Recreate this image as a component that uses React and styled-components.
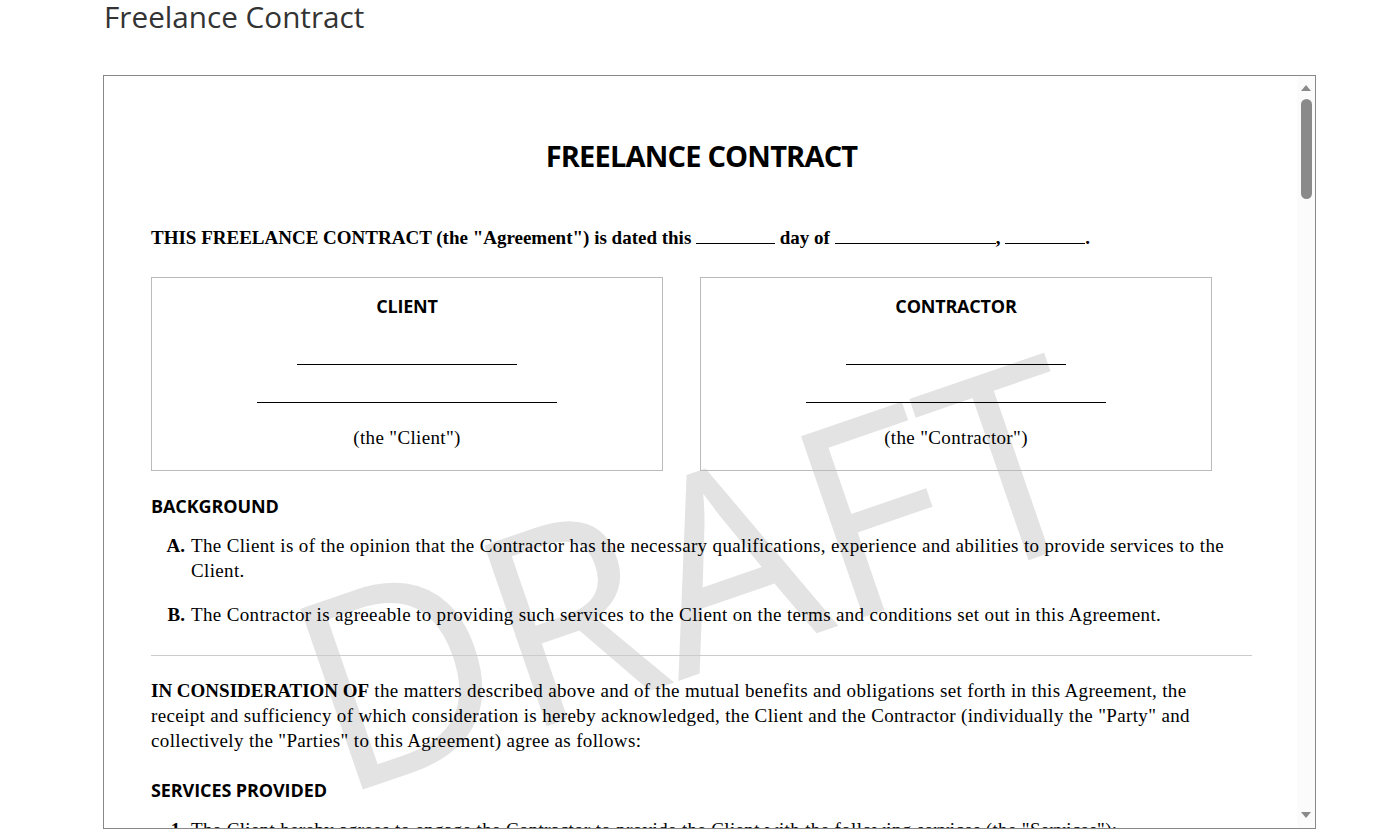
import React from 'react';
import styled, { createGlobalStyle } from 'styled-components';

const GlobalStyle = createGlobalStyle`
    html, body {
        margin: 0;
        padding: 0;
        background: #fff;
    }
    body {
        font-family: "Open Sans", "Liberation Sans", sans-serif;
        overflow: hidden;
    }
`;

const Page = styled.div`
    padding: 0 0 0 103px;
`;

const PageTitle = styled.h1`
    margin: -6px 0 0 1px;
    height: 46px;
    font-family: "Open Sans", sans-serif;
    font-weight: 400;
    font-size: 29.7px;
    line-height: 46px;
    color: #333;
`;

const Frame = styled.div`
    margin-top: 35px;
    width: 1211px;
    height: 752px;
    border: 1px solid #888;
    display: flex;
`;

const Viewport = styled.div`
    position: relative;
    flex: 1;
    overflow: hidden;
`;

const Watermark = styled.span`
    position: absolute;
    left: 586px;
    top: 492px;
    transform: translate(-50%, -50%) rotate(-19deg);
    font-family: "Open Sans", sans-serif;
    font-size: 268px;
    font-weight: 400;
    line-height: 1;
    color: #e3e3e3;
    white-space: nowrap;
    pointer-events: none;
    user-select: none;
`;

const Doc = styled.div`
    position: relative;
    padding: 62px 45px 0 47px;
    font-family: "Liberation Serif", "Times New Roman", serif;
    font-size: 19px;
    line-height: 25px;
    letter-spacing: 0.35px;
    color: #000;

    b {
        letter-spacing: 0;
    }
`;

const DocTitle = styled.h2`
    margin: 0;
    text-align: center;
    font-family: "Open Sans", sans-serif;
    font-weight: 700;
    font-size: 29px;
    line-height: 36px;
    letter-spacing: -0.8px;
`;

const Intro = styled.p`
    margin: ${p => p.$top}px 0 0;
    font-weight: 700;
    letter-spacing: 0;
`;

const Blank = styled.span`
    display: inline-block;
    width: ${p => p.$w}px;
    height: 14px;
    border-bottom: 1.5px solid #000;
    vertical-align: baseline;
`;

const Parties = styled.div`
    margin-top: 27px;
    display: grid;
    grid-template-columns: 512px 512px;
    column-gap: 37px;
`;

const PartyBox = styled.div`
    border: 1px solid #bbb;
    padding: 16px 0 20px;
    display: flex;
    flex-direction: column;
    align-items: center;
    box-sizing: border-box;
    height: 194px;
`;

const BoxHeading = styled.h3`
    margin: 0;
    font-family: "Open Sans", sans-serif;
    font-weight: 700;
    font-size: 18px;
    line-height: 24px;
    letter-spacing: -0.2px;
`;

const SignLine = styled.div`
    width: ${p => p.$w}px;
    margin-top: ${p => p.$top}px;
    border-bottom: 1px solid #000;
`;

const PartyLabel = styled.div`
    margin-top: 22px;
`;

const SectionHeading = styled.h3`
    margin: ${p => p.$top}px 0 0;
    font-family: "Open Sans", sans-serif;
    font-weight: 700;
    font-size: 18px;
    line-height: 24px;
    letter-spacing: -0.1px;
`;

const List = styled.ol`
    list-style: none;
    margin: ${p => p.$top}px 0 0;
    padding: 0;
    display: flex;
    flex-direction: column;
    gap: 19px;
`;

const Item = styled.li`
    display: grid;
    grid-template-columns: 40px 1fr;
`;

const Marker = styled.span`
    font-weight: 700;
    letter-spacing: 0;
    text-align: right;
    padding-right: 6px;
`;

const Rule = styled.hr`
    margin: 28px 0 0;
    border: 0;
    border-top: 1px solid #ccc;
`;

const Para = styled.p`
    margin: 22px 0 0;
    max-width: 1070px;
`;

const ScrollTrack = styled.div`
    width: 18px;
    background: #fbfbfb;
    display: flex;
    flex-direction: column;
    align-items: center;
    padding-top: 9px;
    box-sizing: border-box;
`;

const Arrow = styled.div`
    width: 0;
    height: 0;
    border-left: 5px solid transparent;
    border-right: 5px solid transparent;
    ${p => p.$down
        ? 'border-top: 6px solid #8a8a8a; margin-top: auto; margin-bottom: 10px;'
        : 'border-bottom: 6px solid #8a8a8a;'}
`;

const Thumb = styled.div`
    margin-top: 8px;
    width: 11px;
    height: 100px;
    border-radius: 6px;
    background: #8a8a8a;
`;

export default function App() {
    return (
        <Page>
            <GlobalStyle />
            <PageTitle>Freelance Contract</PageTitle>
            <Frame>
                <Viewport>
                    <Watermark>DRAFT</Watermark>
                    <Doc>
                        <DocTitle>FREELANCE CONTRACT</DocTitle>
                        <Intro $top={51}>
                            THIS FREELANCE CONTRACT (the "Agreement") is dated this <Blank $w={79} /> day of <Blank $w={161} />, <Blank $w={80} />.
                        </Intro>
                        <Parties>
                            <PartyBox>
                                <BoxHeading>CLIENT</BoxHeading>
                                <SignLine $w={220} $top={46} />
                                <SignLine $w={300} $top={37} />
                                <PartyLabel>(the "Client")</PartyLabel>
                            </PartyBox>
                            <PartyBox>
                                <BoxHeading>CONTRACTOR</BoxHeading>
                                <SignLine $w={220} $top={46} />
                                <SignLine $w={300} $top={37} />
                                <PartyLabel>(the "Contractor")</PartyLabel>
                            </PartyBox>
                        </Parties>
                        <SectionHeading $top={23}>BACKGROUND</SectionHeading>
                        <List $top={15}>
                            <Item>
                                <Marker>A.</Marker>
                                <span>The Client is of the opinion that the Contractor has the necessary qualifications, experience and abilities to provide services to the Client.</span>
                            </Item>
                            <Item>
                                <Marker>B.</Marker>
                                <span>The Contractor is agreeable to providing such services to the Client on the terms and conditions set out in this Agreement.</span>
                            </Item>
                        </List>
                        <Rule />
                        <Para>
                            <b>IN CONSIDERATION OF</b> the matters described above and of the mutual benefits and obligations set forth in this Agreement, the receipt and sufficiency of which consideration is hereby acknowledged, the Client and the Contractor (individually the "Party" and collectively the "Parties" to this Agreement) agree as follows:
                        </Para>
                        <SectionHeading $top={25}>SERVICES PROVIDED</SectionHeading>
                        <List $top={15}>
                            <Item>
                                <Marker>1.</Marker>
                                <span>The Client hereby agrees to engage the Contractor to provide the Client with the following services (the "Services"):</span>
                            </Item>
                        </List>
                    </Doc>
                </Viewport>
                <ScrollTrack>
                    <Arrow />
                    <Thumb />
                    <Arrow $down />
                </ScrollTrack>
            </Frame>
        </Page>
    );
}
